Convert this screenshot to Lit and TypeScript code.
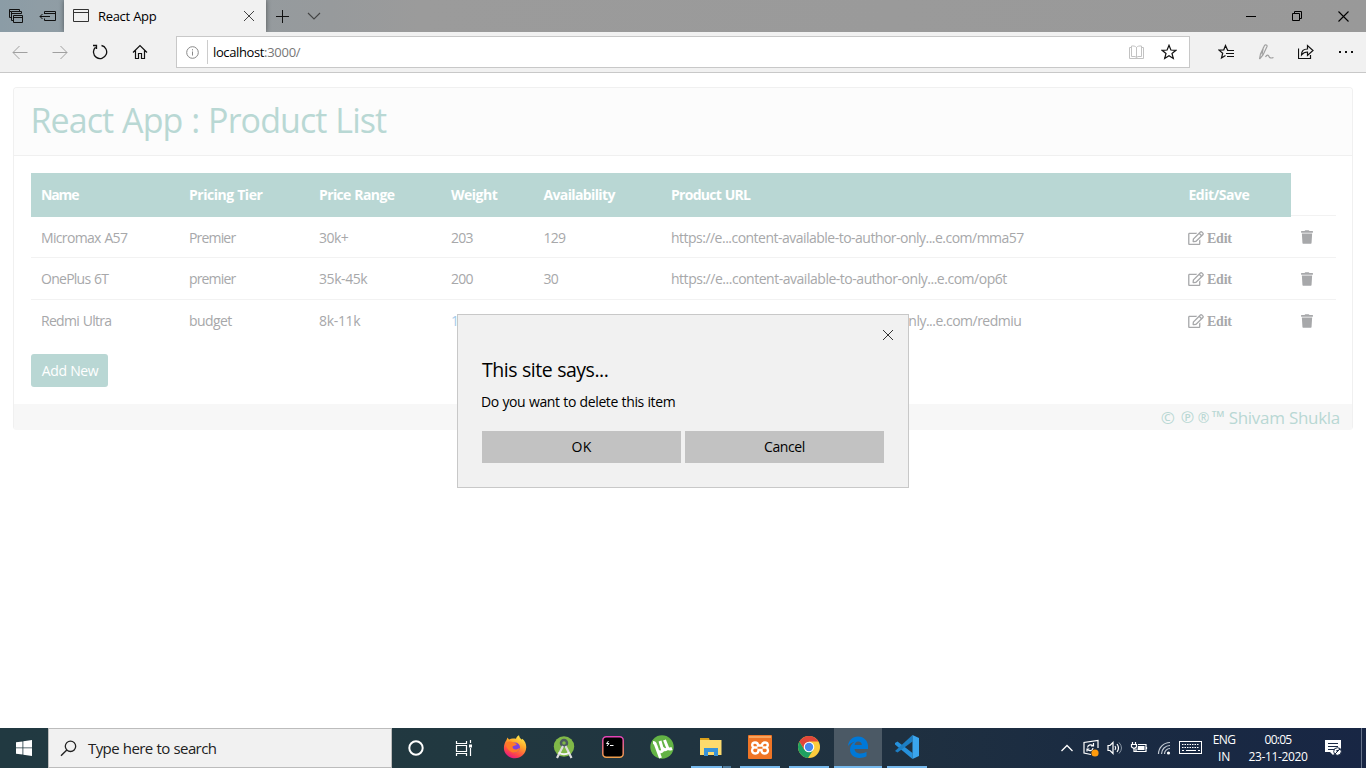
import { LitElement, html, css, svg } from "lit";
import { customElement } from "lit/decorators.js";
import { styleMap } from "lit/directives/style-map.js";

const SANS = '"Open Sans", "Noto Sans", sans-serif';
const pen = document.createElement("canvas").getContext("2d")!;

/** Text tracked so that it fills the given width; word gaps keep their natural size. */
const fit = (text: string, width: number, size: number, weight = 400, family = SANS) => {
  pen.font = `${weight} ${size}px ${family}`;
  const letters = text.replace(/ /g, "").length;
  const gap = (width - 0.7 - pen.measureText(text).width) / letters;
  return html`<span style=${styleMap({ letterSpacing: `${gap.toFixed(3)}px`, wordSpacing: `${(-gap).toFixed(3)}px` })}>${text}</span>`;
};

const icon = (w: number, h: number, body: unknown) =>
  html`<svg width=${w} height=${h} viewBox="0 0 ${w} ${h}" fill="none" stroke="currentColor" stroke-width="1">${body}</svg>`;

const base = css`
  * { box-sizing: border-box; }
  svg { display: block; flex: none; }
  span { white-space: pre; }
`;

@customElement("edge-chrome")
class EdgeChrome extends LitElement {
  static styles = [base, css`
    :host { display: block; font-family: "Open Sans", "Noto Sans", sans-serif; color: #111; }
    .bar { display: flex; height: 32px; background: linear-gradient(90deg, #8b9ca6 0, #8f9da5 40px, #979a9c 330px, #9b9b9b 420px, #999 100%); }
    .cell { display: flex; align-items: center; justify-content: center; width: 32px; }
    .tab { display: flex; align-items: center; width: 202px; background: #f1f1f1; font-size: 13px; line-height: 30px; padding: 0 11px 0 9px; box-shadow: 0 0 5px rgba(0,0,0,.45); clip-path: inset(0 -6px 0 -6px); }
    .label { flex: 1; padding-left: 9px; color: #000; }
    .controls { display: flex; margin-left: auto; }
    .controls .cell { width: 46px; color: #000; }
    .nav { display: flex; align-items: center; height: 41px; background: #f1f1f1; border-bottom: 1px solid #c8c8c8; }
    .nav .cell { width: 40px; }
    .nav .dim { color: #a0a0a0; }
    .address { display: flex; align-items: center; width: 1014px; height: 32px; margin: 0 16px; background: #fff; border: 1px solid #c8c8c8; font-size: 13px; line-height: 30px; }
    .address .info { width: 30px; color: #888; }
    .rule { width: 1px; height: 24px; background: #ccc; margin-right: 5px; }
    .url { flex: 1; color: #777; }
    .host { color: #000; }
    .address .end { width: 33px; display: flex; justify-content: center; }
    .address .last { margin-right: 4px; width: 32px; }
    .pale { color: #c2c2c2; }
  `];
  render() {
    return html`
      <div class="bar">
        <div class="cell">${icon(16, 16, svg`<path d="M3.500 9.500h-2v-8h10v2M1.500 3.500h2M5.500 12.500h-2v-9h10v2M3.500 5.500h10M5.500 14.500v-7h9v7zM5.500 9.500h9" stroke="#111"/>`)}</div>
        <div class="cell">${icon(18, 16, svg`<path d="M5.500 6v-2.500h11v9h-11v-2M5.500 5.500h11M1 8.500h10M3.500 6l-2.500 2.500 2.500 2.500" stroke="#111"/>`)}</div>
        <div class="tab">
          ${icon(16, 14, svg`<path d="M.5.500h15v12h-15zM.5 3.500h15" stroke="#333"/>`)}
          <div class="label">${fit("React App", 59, 13)}</div>
          ${icon(12, 12, svg`<path d="M1 1l10 10M11 1L1 11" stroke="#444"/>`)}
        </div>
        <div class="cell">${icon(14, 14, svg`<path d="M7.500 1v13M1 7.500h13" stroke="#111"/>`)}</div>
        <div class="cell">${icon(14, 8, svg`<path d="M1 1l6 6 6-6" stroke="#444" stroke-width="1.100"/>`)}</div>
        <div class="controls">
          <div class="cell">${icon(10, 10, svg`<path d="M0 5.500h10"/>`)}</div>
          <div class="cell">${icon(10, 10, svg`<path d="M.5 2.500h7v7h-7zM2.500 2.500v-2h7v7h-2"/>`)}</div>
          <div class="cell">${icon(11, 11, svg`<path d="M.5.500l10 10M10.500.500l-10 10" stroke-width="1.100"/>`)}</div>
        </div>
      </div>
      <div class="nav">
        <div class="cell dim">${icon(16, 14, svg`<path d="M1 7.500h14.500M7.500 1L1 7.500 7.500 14"/>`)}</div>
        <div class="cell dim">${icon(16, 14, svg`<path d="M.5 7.500H15M8.500 1L15 7.500 8.500 14"/>`)}</div>
        <div class="cell">${icon(16, 16, svg`<path d="M9.500 1.500A6.600 6.600 0 1 1 3.500 3.200M1 1.500h3.500V5" stroke-width="1.300"/>`)}</div>
        <div class="cell">${icon(16, 16, svg`<path d="M1 8.500l7-7 7 7M3.500 6.500v8h3v-5h3v5h3v-8" stroke-width="1.200"/>`)}</div>
        <div class="address">
          <div class="info cell">${icon(13, 13, svg`<circle cx="6.500" cy="6.500" r="5.800"/><path d="M6.500 5.500v4M6.500 3.200v1.200"/>`)}</div>
          <div class="rule"></div>
          <div class="url"><span class="host">${fit("localhost", 51.7, 13)}</span>${fit(":3000/", 37, 13)}</div>
          <div class="end pale">${icon(16, 14, svg`<path d="M7.500 2v10.500M7.500 2.500C6.500 1 4 .8 2.500 1v10.500h3.500l1.500 1 1.500-1h3.500V1c-2-.2-4 0-5 1.500M2.500 2.500h-2v11h14v-11h-2"/>`)}</div>
          <div class="end last">${icon(16, 16, svg`<path d="M8 1.300l1.900 4.700 5 .3-3.900 3.200 1.300 5L8 11.800l-4.300 2.700 1.300-5L1.100 6.300l5-.3z" stroke-width="1.200"/>`)}</div>
        </div>
        <div class="cell">${icon(17, 16, svg`<path d="M10 6L9.300 5.500 7.500 1.500 5.800 5.800l-4.800.300 3.700 3.100-1.200 4.800L7.500 11.500M9 6.500h7M8 9.500h8M9 12.500h7" stroke-width="1.200"/>`)}</div>
        <div class="cell dim">${icon(17, 16, svg`<path d="M1.500 15L2.500 10 6.500 1.500c.8-1.200 3-.5 2.500 1L5 11l-3.500 4M5.500 3L4 10.500M7.500 13c1.500-3 3-2 3.500-.5s2 2 4.500 1" stroke-width="1.200"/>`)}</div>
        <div class="cell">${icon(17, 16, svg`<path d="M.5 4.500v10h12V11M3.500 11c0-4 2-6 6-6V1.500L15 6.500l-5.500 5V8C7 8 5 9 3.500 11z" stroke-width="1.200"/>`)}</div>
        <div class="cell">${icon(16, 4, svg`<path d="M1 2h2M7 2h2M13 2h2" stroke-width="2"/>`)}</div>
      </div>`;
  }
}

interface Row { cells: [string, number][]; }
const HEAD: [string, number][] = [["Name", 38], ["Pricing Tier", 74], ["Price Range", 76], ["Weight", 47], ["Availability", 72], ["Product URL", 80], ["Edit/Save", 61.5]];
const ROWS: Row[] = [
  { cells: [["Micromax A57", 87], ["Premier", 47], ["30k+", 30], ["203", 22.5], ["129", 22.5], ["https://e...content-available-to-author-only...e.com/mma57", 353.5]] },
  { cells: [["OnePlus 6T", 68], ["premier", 47], ["35k-45k", 49], ["200", 22.5], ["30", 15], ["https://e...content-available-to-author-only...e.com/op6t", 336.5]] },
  { cells: [["Redmi Ultra", 71], ["budget", 43.5], ["8k-11k", 42], ["1", 7], ["", 0], ["https://e...content-available-to-author-only...e.com/redmiu", 351]] },
];

@customElement("product-list")
class ProductList extends LitElement {
  static styles = [base, css`
    :host { display: block; padding: 14px 13px 0; font-family: "Open Sans", "Noto Sans", sans-serif; font-size: 14px; color: #a7a8aa; }
    .card { height: 343px; border: 1px solid #f0f0f0; border-bottom: 0; border-radius: 4px; background: #fff; display: flex; flex-direction: column; overflow: hidden; }
    .head { height: 68px; flex: none; background: #fcfcfc; border-bottom: 1px solid #f0f0f0; padding-left: 16.500px; font-size: 34px; line-height: 64px; color: #b9d8d4; }
    .body { flex: 1; padding: 17px 16px 0 17px; }
    .row { display: grid; grid-template-columns: 148px 130px 132px 92.500px 127.500px 517px 113px 1fr; height: 42px; line-height: 41px; border-bottom: 1px solid #f2f2f2; }
    .row.second { height: 42px; line-height: 42px; }
    .row.first { height: 41px; line-height: 41px; }
    .row.last { border: 0; height: 54px; line-height: 42px; }
    .cell { padding-left: 10px; }
    .titles { display: grid; grid-template-columns: 1260px 1fr; height: 44px; }
    .band { display: grid; grid-template-columns: 148px 130px 132px 92.500px 127.500px 517.500px 112.500px; background: #b9d7d4; color: #fff; font-weight: 700; line-height: 44px; }
    .blank { height: 43px; border-bottom: 1px solid #f2f2f2; }
    .edit { display: flex; align-items: center; gap: 3px; height: 42px; padding: 1px 0 0 10px; font-family: "Liberation Serif", serif; font-weight: 700; font-size: 14px; line-height: 41px; }
    .pencil { margin-bottom: 2px; }
    .bin { display: flex; align-items: center; height: 42px; padding: 0 0 0 10px; }
    .first .bin { height: 40px; }
    .add { display: flex; align-items: center; justify-content: center; width: 77px; height: 33px; border-radius: 3px; background: #b9d7d4; color: #fff; line-height: 33px; padding-left: 1px; }
    .foot { display: flex; justify-content: flex-end; height: 26px; flex: none; background: #f7f7f7; padding-right: 12px; font-size: 17px; line-height: 27px; color: #b9d8d4; }
    .copy { width: 20px; }
    .pub { width: 17px; font-size: 16px; }
    .reg { width: 14px; font-size: 14px; line-height: 27px; }
    .tm { width: 17px; line-height: 26px; }
    .picked { color: #a5cbea; }
  `];
  private row(r: Row, kind: string) {
    return html`<div class="row ${kind}">
      ${r.cells.map(([t, w]) => html`<div class="cell ${t === "1" ? "picked" : ""}">${t ? fit(t, w, 14) : ""}</div>`)}
      <div class="edit">
        <svg class="pencil" width="16" height="14" viewBox="0 0 576 512" fill="currentColor"><path d="M402.300 344.900l32-32c5-5 13.700-1.500 13.700 5.700V464c0 26.500-21.500 48-48 48H48c-26.500 0-48-21.500-48-48V112c0-26.500 21.500-48 48-48h273.500c7.100 0 10.700 8.600 5.700 13.700l-32 32c-1.500 1.500-3.500 2.300-5.700 2.300H48v352h352V350.500c0-2.100.8-4.100 2.300-5.600zm156.600-201.800L296.300 405.700l-90.400 10c-26.200 2.900-48.500-19.200-45.600-45.600l10-90.400L432.900 17.100c22.900-22.900 59.900-22.900 82.700 0l43.200 43.200c22.900 22.900 22.900 60 .1 82.800zM460.100 174L402 115.900 216.200 301.800l-7.300 65.300 65.300-7.300L460.100 174zm64.800-79.700l-43.200-43.200c-4.100-4.100-10.800-4.100-14.800 0L436 82l58.100 58.100 30.900-30.900c4-4.200 4-10.800-.1-14.900z"/></svg>
        ${fit("Edit", 25.5, 14, 700, '"Liberation Serif", serif')}
      </div>
      <div class="bin">
        <svg width="12" height="14" viewBox="0 0 448 512" fill="currentColor"><path d="M432 32H312l-9.400-18.700A24 24 0 0 0 281.100 0H166.800a23.720 23.720 0 0 0-21.400 13.300L136 32H16A16 16 0 0 0 0 48v32a16 16 0 0 0 16 16h416a16 16 0 0 0 16-16V48a16 16 0 0 0-16-16zM53.200 467a48 48 0 0 0 47.900 45h245.800a48 48 0 0 0 47.900-45L416 128H32z"/></svg>
      </div>
    </div>`;
  }
  render() {
    return html`<div class="card">
      <div class="head">${fit("React App : Product List", 356.5, 34)}</div>
      <div class="body">
        <div class="titles">
          <div class="band">${HEAD.map(([t, w]) => html`<div class="cell">${fit(t, w, 14, 700)}</div>`)}</div>
          <div class="blank"></div>
        </div>
        ${this.row(ROWS[0], "first")}${this.row(ROWS[1], "second")}${this.row(ROWS[2], "last")}
        <div class="add">${fit("Add New", 57, 14)}</div>
      </div>
      <div class="foot"><span class="copy">©</span><span class="pub">℗</span><span class="reg">®</span><span class="tm">™</span>${fit("Shivam Shukla", 112, 17)}</div>
    </div>`;
  }
}

@customElement("site-dialog")
class SiteDialog extends LitElement {
  static styles = [base, css`
    :host { display: flex; flex-direction: column; width: 452px; height: 174px; background: #f1f1f1; border: 1px solid #c8c8c8; padding: 14px 24px 0 24px; font-family: "Open Sans", "Noto Sans", sans-serif; color: #000; font-size: 14px; box-sizing: border-box; }
    .close { display: flex; justify-content: flex-end; height: 24px; margin-right: -10px; color: #333; }
    .title { font-size: 19.500px; line-height: 34px; height: 34px; }
    .text { line-height: 30px; height: 30px; margin-left: -1px; }
    .buttons { display: grid; grid-template-columns: 199px 199px; gap: 4px; margin-top: 14px; }
    .button { height: 32px; background: #c2c2c2; line-height: 32px; text-align: center; }
  `];
  render() {
    return html`
      <div class="close">${icon(12, 12, svg`<path d="M1 1l10 10M11 1L1 11"/>`)}</div>
      <div class="title">${fit("This site says...", 127, 19.5)}</div>
      <div class="text">${fit("Do you want to delete this item", 195, 14)}</div>
      <div class="buttons"><div class="button">${fit("OK", 20.5, 14)}</div><div class="button">${fit("Cancel", 41.5, 14)}</div></div>`;
  }
}

@customElement("task-bar")
class TaskBar extends LitElement {
  static styles = [base, css`
    :host { display: flex; height: 40px; background: linear-gradient(90deg, #213941 0, #213840 480px, #1f3040 900px, #1a2b42 1100px, #182644 100%); font-family: "Open Sans", "Noto Sans", sans-serif; color: #fff; }
    .cell { display: flex; align-items: center; justify-content: center; }
    .start { width: 48px; }
    .search { display: flex; align-items: center; width: 344px; background: #f1f1f1; border: 1px solid #bcbcbc; color: #222; font-size: 15px; line-height: 38px; padding: 0 0 0 11px; gap: 11px; }
    .narrow { width: 48px; }
    .view { width: 47px; }
    .apps { display: flex; padding-left: 3px; }
    .app { display: grid; grid-template-rows: 38px 2px; justify-items: center; align-items: center; width: 49px; }
    .app.active { background: #4b5965; width: 48px; margin-left: 1px; }
    .line { width: 40px; height: 2px; background: #76b9ed; }
    .active .line { width: 48px; }
    .stack .line { background: linear-gradient(90deg, #76b9ed 31px, #263a48 31px, #263a48 32px, #4f7d9f 32px); }
    .tray { display: flex; margin-left: auto; }
    .t24 { width: 24px; }
    .t25 { width: 25px; }
    .t29 { width: 29px; }
    .two { display: flex; flex-direction: column; align-items: center; font-size: 12px; line-height: 17px; padding-top: 3px; }
    .lang { width: 38px; }
    .clock { width: 70px; }
    .note { width: 40px; }
    .peek { width: 5px; margin-left: 8px; border-left: 1px solid #66738a; }
  `];
  private app(body: unknown, kind = "", running = false) {
    return html`<div class="app ${kind}">${icon(24, 24, body)}${running ? html`<div class="line"></div>` : ""}</div>`;
  }
  render() {
    return html`
      <div class="cell start">${icon(16, 16, svg`<path d="M0 2.300l6.500-.900v6.100H0zM7.300 1.300L16 0v7.500H7.300zM0 8.300h6.500v6.200L0 13.700zM7.300 8.300H16V16l-8.700-1.300z" fill="#fff" stroke="none"/>`)}</div>
      <div class="search">${icon(17, 17, svg`<circle cx="10.500" cy="6.300" r="5.200" stroke="#222" stroke-width="1.300"/><path d="M6.800 10L1 15.800" stroke="#222" stroke-width="1.400"/>`)}${fit("Type here to search", 129, 15)}</div>
      <div class="cell narrow">${icon(16, 16, svg`<circle cx="8" cy="8" r="6.700" stroke-width="2"/>`)}</div>
      <div class="cell view">${icon(18, 16, svg`<path d="M1.500 1v2.500h10V1M1.500 5.500h10v6h-10zM1.500 16v-2.500h10V16M15.500 0v3M15.500 8v8" stroke-width="1.200"/><path d="M14 4.500h3v3h-3z" fill="#fff" stroke="none"/>`)}</div>
      <div class="apps">
        ${this.app(svg`<defs><linearGradient id="ff" x1=".8" y1="0" x2=".3" y2="1"><stop offset="0" stop-color="#fff44f"/><stop offset=".4" stop-color="#ffa52a"/><stop offset=".75" stop-color="#ff4a45"/><stop offset="1" stop-color="#e31587"/></linearGradient></defs><g stroke="none"><path d="M3.500 5c.300-1.200.8-2 1.300-2.500.2 1 .8 1.600 1.500 2 1.200-.8 2.700-1.200 4-1 1 0 2 0 2.700.3C13.500 2 14.800.8 16 .3c.3 2 1.200 3 2.500 4.200.300.2.7 0 .8-.7 3 2.500 4.200 6 3.900 9-.4 6-5.200 10.500-11.200 10.500S.9 18.800.9 13c0-3 1-6 2.600-8z" fill="url(#ff)"/><circle cx="12" cy="12.500" r="5" fill="#7a42e0"/><path d="M3 8c2-2 5-2 7.500-.5L14 9c-1 1.500-3 1.500-4.500 2.500 0 2 1.700 3.500 4 3 1.700-.5 2.500-1.500 3.500-1-1 3.500-5 5-8.500 3.500C4.500 15 3 12 3 8z" fill="#ff7a27"/></g>`)}
        ${this.app(svg`<circle cx="12" cy="11.500" r="10.200" fill="#80b848" stroke="none"/><circle cx="12" cy="8" r="3" stroke="#4c5b60" stroke-width="2.500"/><path d="M11 11L5 23M13.500 11l6 12" stroke="#ddd" stroke-width="2.200"/><path d="M6.500 17.500c3.500 2.200 7.500 2.200 11 0" stroke="#f4f4f4" stroke-width="1.800"/>`)}
        ${this.app(svg`<defs><linearGradient id="tm" x2="0" y2="1"><stop stop-color="#e444b8"/><stop offset="1" stop-color="#f0a04c"/></linearGradient></defs><rect x="1.800" y="1.800" width="20.400" height="20.400" rx="3.500" fill="#000" stroke="url(#tm)" stroke-width="1.500"/><path d="M7.500 6l-2 2.500h2.500L6 11M9 10.500h3.500" stroke="#fff"/>`)}
        ${this.app(svg`<circle cx="12" cy="12" r="11.700" fill="#63b345" stroke="none"/><path d="M3 7.500c1 0 2 .5 2.500 2L7.500 15c1 2.500 4 2.500 5.300.500L10 6M14.500 5l3 7.500c.7 1.700 2 2 4.500 1M12.500 13c1.500 2 3 2.500 5 .500M7.500 15l3 8" stroke="#fff" stroke-width="3"/>`)}
        ${this.app(svg`<g stroke="none"><path d="M1 3h9l1 3H1z" fill="#dca21c"/><path d="M1 5h21.500v15H1z" fill="#fddb6d"/><path d="M5 21v-8h14v8h-4v-4H9v4z" fill="#3893d8"/></g>`, "stack", true)}
        ${this.app(svg`<rect width="24" height="24" rx="1" fill="#ef7526" stroke="none"/><path d="M1 1h22v2H1z" fill="#f8a45d" stroke="none"/><path d="M6 12.500C3 14 3.500 18.500 7.500 18.500c3 0 3-2.500 3-3.500h3c0 1 0 3.500 3 3.500 4 0 4.500-4.500 1.500-6 3-1.500 2-5-1-5s-3 2-3 3h-4c0-1 0-3-3-3s-4 3.500-1 5zM6 12.500h3.500M14.500 12.500H18" stroke="#fff" stroke-width="2.300"/>`, "", true)}
        ${this.app(svg`<g stroke="none"><circle cx="12" cy="12" r="11" fill="#fccc3d"/><path d="M12 12L2.500 6.500A11 11 0 0 1 21.500 6.500H12z" fill="#e1463a"/><path d="M2.500 6.500A11 11 0 0 0 11 23l5.500-8.500L12 12 7 14z" fill="#1ea161"/><path d="M7.500 15L2.500 6.500A11 11 0 0 1 4 4.500l6 6z" fill="#e1463a"/><circle cx="12" cy="12" r="5.300" fill="#fff"/><circle cx="12" cy="12" r="4.200" fill="#4788ef"/></g>`, "", true)}
        ${this.app(svg`<path d="M2 11C2.500 5.500 6.500 1.500 12 1.500c6 0 10 4.500 10 9.500v3H8.500c.2 3 3 4.500 6 4.500 2.200 0 4.500-.7 6-1.700v4.500c-2 1.200-4.500 1.700-7 1.700-6 0-9.500-3.700-9.500-8.500 0-3.500 2-6.300 5-7.700-3 .4-5.500 2-7 4.200zM8.600 10h7.200c0-2-1.300-3.500-3.500-3.500S8.900 8 8.600 10z" fill="#0078d7" stroke="none"/>`, "active", true)}
        ${this.app(svg`<g stroke="none"><path d="M0 8l2.500-1.500L17.500 18v6L0 9.500z" fill="#2691dc"/><path d="M0 16L17.500 0v6.500L2.500 17.500z" fill="#1c7ec4"/><path d="M17.500 0L24 3v18l-6.500 3z" fill="#3aa5ee"/></g>`, "", true)}
      </div>
      <div class="tray">
        <div class="cell t24">${icon(14, 8, svg`<path d="M1.500 7l5.500-5.500L12.500 7" stroke-width="1.300"/>`)}</div>
        <div class="cell t24">${icon(18, 18, svg`<path d="M9 15.500L2 14V3.500L16 1.500V9M5.500 8.500c.5-3 4-3.500 5.500-1.500M11.500 4v3H9M11 9c-.500 3-4 3.500-5.500 1.500M5 12.500v-2.500h2.500" stroke-width="1.200"/><circle cx="13" cy="14" r="3.600" fill="#ff9b0d" stroke="none"/>`)}</div>
        <div class="cell t24">${icon(16, 14, svg`<path d="M1 4.500h2l3-3v11l-3-3H1zM8 5q1.500 2 0 4M10 3q3 4 0 8" stroke-width="1.200"/><path d="M12 1.500q5 5.500 0 11" stroke="#8b98a6"/>`)}</div>
        <div class="cell t24">${icon(18, 14, svg`<path d="M2.500 1v3M5.500 1v3M1.500 3.500h5v2.500l-2.500 1.500-2.500-1.500zM4 7v3.500h2M8 3.500h8v7H6v-3M16.500 6v2" stroke-width="1.200"/><path d="M8 5h6.500v4H7.500z" fill="#fff" stroke="none"/>`)}</div>
        <div class="cell t25">${icon(14, 14, svg`<path d="M1.500 13A11.500 11.500 0 0 1 13 1.500M4.500 13A8.500 8.500 0 0 1 13 4.500M7.500 13A5.500 5.500 0 0 1 13 7.500" stroke="#c4cbd4" stroke-width="1.200"/><circle cx="11.500" cy="12" r="1.600" fill="#fff" stroke="none"/>`)}</div>
        <div class="cell t29">${icon(24, 14, svg`<rect x=".5" y=".5" width="22" height="12"/><path d="M3 3.500h17.500M3 6.500h17.500" stroke-dasharray="1.500 1"/><path d="M3 9.500h2M7 9.500h10M19 9.500h2"/>`)}</div>
        <div class="two lang">${fit("ENG", 23, 12)}${fit("IN", 12.5, 12)}</div>
        <div class="two clock">${fit("00:05", 27.5, 12)}${fit("23-11-2020", 59.5, 12)}</div>
        <div class="cell note">${icon(18, 18, svg`<path d="M1 1h16v12h-5l-3 3-3-3H1z" fill="#fff" stroke="none"/><path d="M4 4.500h10M4 7.500h10M4 10.500h6" stroke="#1a2943"/><circle cx="13.500" cy="12.500" r="3.800" fill="#fff" stroke="#1a2943"/><path d="M11 15l5-5M12 12l3-1" stroke="#1a2943"/>`)}</div>
        <div class="peek"></div>
      </div>`;
  }
}

@customElement("app-root")
class AppRoot extends LitElement {
  static styles = css`
    :host { display: block; width: 1366px; height: 768px; overflow: hidden; background: #fff; position: relative; }
    .screen { display: grid; grid-template-rows: 73px 655px 40px; }
    .dialog { position: absolute; left: 457px; top: 314px; }
  `;
  render() {
    return html`<div class="screen"><edge-chrome></edge-chrome><product-list></product-list><task-bar></task-bar></div>
      <site-dialog class="dialog"></site-dialog>`;
  }
}
